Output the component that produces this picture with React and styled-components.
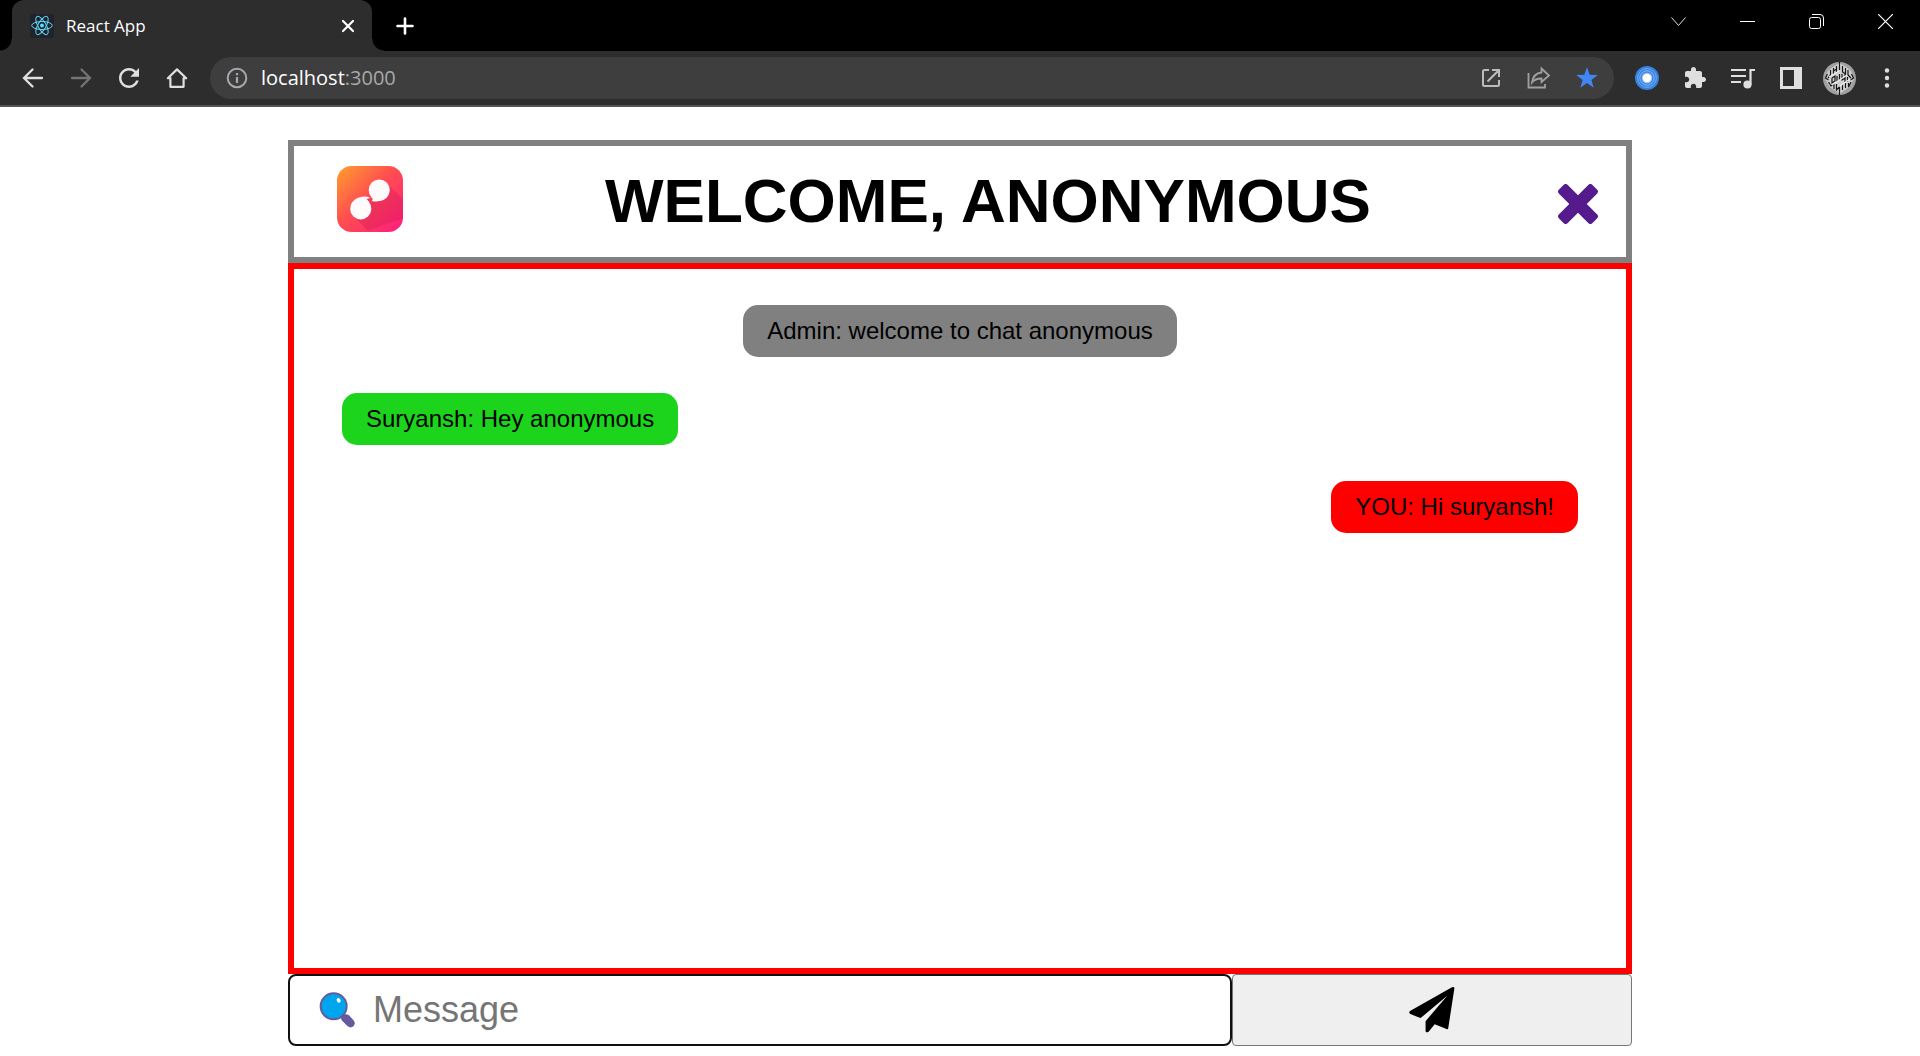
import React from "react";
import styled, { createGlobalStyle } from "styled-components";

const GlobalStyle = createGlobalStyle`
  * { box-sizing: border-box; }
  body { margin: 0; background: #ffffff; font-family: Arial, "Liberation Sans", sans-serif; }
  button, input { font: inherit; }
  h1 { margin: 0; }
`;

const Screen = styled.div`
  min-height: 100vh;
  display: flex;
  flex-direction: column;
`;

const BrowserFrame = styled.header`
  background: #2d2d2d;
  border-bottom: 2px solid #545454;
  font-family: "Segoe UI", "Open Sans", "Noto Sans", sans-serif;
`;

const TitleBar = styled.div`
  display: flex;
  height: 51px;
  padding-left: 12px;
  background: #000000;
`;

const Tab = styled.div`
  position: relative;
  display: flex;
  align-items: center;
  gap: 12px;
  width: 360px;
  padding: 0 12px 0 18px;
  border-radius: 12px 12px 0 0;
  background: #2d2d2d;
  color: #ffffff;
  font-size: 17px;

  &::before, &::after {
    content: "";
    position: absolute;
    bottom: 0;
    width: 12px;
    height: 12px;
  }
  &::before {
    right: 100%;
    background: radial-gradient(circle at 0 0, #000000 11px, #2d2d2d 12px);
  }
  &::after {
    left: 100%;
    background: radial-gradient(circle at 100% 0, #000000 11px, #2d2d2d 12px);
  }
`;

const TabTitle = styled.span`
  flex: 1;
`;

const IconButton = styled.button`
  display: flex;
  flex: none;
  align-items: center;
  justify-content: center;
  width: ${(p) => p.$width || 48}px;
  height: ${(p) => p.$height || 42}px;
  padding: 0;
  border: 0;
  background: transparent;
  color: ${(p) => p.$color || "#dfdfdf"};
`;

const NewTab = styled.div`
  display: flex;
  flex: 1;
  align-items: center;
  padding-left: 9px;
`;

const WindowControls = styled.div`
  display: flex;
  align-items: flex-start;
`;

const Toolbar = styled.div`
  display: flex;
  align-items: center;
  height: 54px;
  padding: 0 9px;
`;

const AddressBar = styled.div`
  display: flex;
  flex: 1;
  align-items: center;
  height: 42px;
  margin: 0 9px;
  padding: 0 3px;
  border-radius: 21px;
  background: #3e3e3e;
`;

const Address = styled.span`
  flex: 1;
  color: #ffffff;
  font-size: 20px;
  line-height: 42px;
`;

const Port = styled.span`
  color: #a8a8a8;
`;

const Page = styled.main`
  display: flex;
  flex: 1;
  flex-direction: column;
  align-items: center;
  padding: 33px 0 10px;
`;

const Chat = styled.section`
  display: flex;
  flex: 1;
  flex-direction: column;
  width: 70%;
`;

const ChatHeader = styled.div`
  display: flex;
  align-items: center;
  justify-content: space-between;
  padding: 19px 28px 20px;
  border: 6px solid #808080;
`;

const LogoBox = styled.div`
  display: flex;
  justify-content: center;
  width: 96px;
  padding-bottom: 5px;
`;

const Title = styled.h1`
  font-size: 62px;
  line-height: 72px;
`;

const CloseLink = styled.a`
  display: flex;
  padding-top: 6px;
  color: #551a8b;
`;

const Messages = styled.div`
  display: flex;
  flex: 1;
  flex-direction: column;
  gap: 36px;
  padding: 36px 48px;
  border: 6px solid #ff0000;
`;

const Bubble = styled.div`
  align-self: ${(p) => p.$side};
  padding: 12px 24px;
  border-radius: 15px;
  background: ${(p) => p.$color};
  color: #000000;
  font-size: 24px;
  line-height: 28px;
`;

const Composer = styled.form`
  display: flex;
  height: 72px;
`;

const MessageField = styled.label`
  display: flex;
  flex: 1;
  align-items: center;
  gap: 18px;
  padding: 0 29px;
  border: 2px solid #101010;
  border-radius: 8px;
  background: #ffffff;
`;

const MessageInput = styled.input`
  flex: 1;
  min-width: 0;
  padding: 0;
  border: 0;
  outline: 0;
  background: transparent;
  font-size: 36px;
  line-height: 42px;

  &::placeholder { color: #757575; opacity: 1; }
`;

const SendButton = styled.button`
  display: flex;
  align-items: center;
  justify-content: center;
  width: 400px;
  padding: 0;
  border: 1px solid #767676;
  border-radius: 4px;
  background: #efefef;
  color: #000000;
`;

const Line = ({ size = 24, width = 2, children, ...rest }) => (
  <svg width={size} height={size} viewBox={`0 0 ${size} ${size}`} fill="none" stroke="currentColor" strokeWidth={width} {...rest}>
    {children}
  </svg>
);

const ReactMark = () => (
  <svg width="24" height="24" viewBox="0 0 24 24" fill="none" stroke="#61dafb">
    <rect width="24" height="24" rx="2" fill="#20232a" stroke="none" />
    <circle cx="12" cy="11.5" r="2" fill="#61dafb" stroke="none" />
    <ellipse cx="12" cy="11.5" rx="10.3" ry="4" />
    <ellipse cx="12" cy="11.5" rx="10.3" ry="4" transform="rotate(60 12 11.5)" />
    <ellipse cx="12" cy="11.5" rx="10.3" ry="4" transform="rotate(120 12 11.5)" />
  </svg>
);

const ArrowIcon = ({ flip }) => (
  <Line width={2.3} strokeLinecap="round">
    <path d={flip ? "M3 12H20.5M12.5 3.5L21 12L12.5 20.5" : "M3.5 12H21M11.5 3.5L3 12L11.5 20.5"} />
  </Line>
);

const ReloadIcon = () => (
  <svg width="30" height="30" viewBox="0 0 24 24" fill="currentColor">
    <path d="M17.65 6.35C16.2 4.9 14.21 4 12 4c-4.42 0-7.99 3.58-7.99 8s3.57 8 7.99 8c3.73 0 6.84-2.55 7.73-6h-2.08c-.82 2.33-3.04 4-5.65 4-3.31 0-6-2.69-6-6s2.69-6 6-6c1.66 0 3.14.69 4.22 1.78L13 11h7V4l-2.35 2.35z" />
  </svg>
);

const HomeIcon = () => (
  <Line width={2.2} strokeLinejoin="round">
    <path d="M2.8 12.2L12 3.4L21.2 12.2H18.6V20.8H5.4V12.2Z" />
  </Line>
);

const InfoIcon = () => (
  <Line>
    <circle cx="12" cy="12" r="9.3" />
    <path d="M12 11V17M12 7V9.2" strokeWidth="2.2" />
  </Line>
);

const OpenIcon = () => (
  <Line>
    <path d="M10 4H5.5Q4 4 4 5.5V18.5Q4 20 5.5 20H18.5Q20 20 20 18.5V14M13 4H20V11M20 4L8.5 15.5" />
  </Line>
);

const ShareIcon = () => (
  <Line width={1.8}>
    <path d="M1.5 7V21.5H18V18" />
    <path d="M14.5 2.5L22 9.5L14.5 16V12.5Q8.5 12.3 5 16.5Q6.5 7.2 14.5 6.5Z" />
  </Line>
);

const StarIcon = () => (
  <svg width="24" height="24" viewBox="0 0 24 24" fill="#4285f4">
    <path d="M12 1L14.7 8.7L22.8 8.9L16.4 13.9L18.7 21.7L12 17.1L5.3 21.7L7.6 13.9L1.2 8.9L9.3 8.7Z" />
  </svg>
);

const TargetIcon = () => (
  <svg width="24" height="24" viewBox="0 0 24 24">
    <circle cx="12" cy="12" r="12" fill="#3480e0" />
    <circle cx="12" cy="12" r="9.4" fill="none" stroke="#7db0f0" strokeWidth="0.9" />
    <circle cx="12" cy="12" r="7.2" fill="#3f88e4" stroke="#8fbcf4" strokeWidth="0.9" />
    <circle cx="12" cy="12" r="5.2" fill="#a9cbf6" />
    <circle cx="12" cy="12" r="4" fill="#ffffff" />
  </svg>
);

const PuzzleIcon = () => (
  <svg width="24" height="24" viewBox="0 0 24 24" fill="currentColor">
    <path d="M20.5 11H19V7c0-1.1-.9-2-2-2h-4V3.5C13 2.12 11.88 1 10.5 1S8 2.12 8 3.5V5H4c-1.1 0-1.99.9-1.99 2v3.8H3.5c1.49 0 2.7 1.21 2.7 2.7s-1.21 2.7-2.7 2.7H2V20c0 1.1.9 2 2 2h3.8v-1.5c0-1.49 1.21-2.7 2.7-2.7 1.49 0 2.7 1.21 2.7 2.7V22H17c1.1 0 2-.9 2-2v-4h1.5c1.38 0 2.5-1.12 2.5-2.5S21.88 11 20.5 11z" />
  </svg>
);

const PlaylistIcon = () => (
  <Line width={2.2}>
    <path d="M0 4H15M0 10H15M0 16H10M24 4H19.5V18.5" />
    <circle cx="16.5" cy="18.5" r="3" fill="currentColor" />
  </Line>
);

const PanelIcon = () => (
  <svg width="22" height="22" viewBox="0 0 22 22" fill="currentColor">
    <path fillRule="evenodd" d="M0 0H22V22H0ZM3 3V19H14V3Z" />
  </svg>
);

const Avatar = () => (
  <svg width="33" height="33" viewBox="0 0 33 33" fill="none" stroke="#161616" strokeWidth="1.2">
    <circle cx="16.5" cy="16.5" r="16.5" fill="#a0a0a0" stroke="none" />
    <path d="M16.5 1L23 5L28 9L31 17L26 25L16.5 32L7 25L2 17L5 9L10 5Z" fill="#cfcfcf" stroke="none" />
    <path d="M16.5 0V8M16.5 25V33M13.5 4V11M10.5 6V12M13.5 7L10.5 9M19.5 4V10L22.5 12V6M25 8V13M7.5 8V13M4.500 12L2.500 16L5.500 18M7.500 13L5 16M28.500 12L30.500 16L27.500 18M25 13L28 16M9 16V21L12 19V14L9 16M14 14V20M16.500 12V18M19 12V18L22 16M22 12V20M24.500 15V20M5.500 20L8 24L11 22V27M13.500 22V28L16.500 25M19.500 22V28M22.500 21V26M25.500 21V25L28 20" />
    <path d="M6 15L16 9M9 23L24 13M17 24L27 17" stroke="#f2f2f2" />
  </svg>
);

const DotsIcon = () => (
  <svg width="24" height="24" viewBox="0 0 24 24" fill="currentColor">
    <circle cx="12" cy="4.5" r="2.2" />
    <circle cx="12" cy="12" r="2.2" />
    <circle cx="12" cy="19.5" r="2.2" />
  </svg>
);

const AppLogo = () => (
  <svg width="66" height="66" viewBox="0 0 200 200">
    <defs>
      <linearGradient id="logo-fill" x1="0" y1="0" x2="1" y2="1">
        <stop offset="0" stopColor="#ffa02c" />
        <stop offset="0.45" stopColor="#ff4f4f" />
        <stop offset="1" stopColor="#ff1a80" />
      </linearGradient>
      <clipPath id="logo-clip"><rect width="200" height="200" rx="44" /></clipPath>
    </defs>
    <g clipPath="url(#logo-clip)">
      <rect width="200" height="200" fill="url(#logo-fill)" />
      <path d="M150 52L200 100V160Q150 175 94 196L50 152L100 105Z" fill="#d81b55" opacity="0.4" />
    </g>
    <g fill="#fffafb">
      <circle cx="128" cy="73" r="32" />
      <circle cx="72" cy="130" r="32" />
      <path d="M97 80L107 98Q104 103 98 104Q108 110 128 106Q150 104 158 82Z" />
      <path d="M103 122L96 106L91 102L102 98Q94 90 76 93Q48 96 41 122Z" />
    </g>
    <path d="M90 100L98 98L110 99L105 104L111 108L102 107L96 106Z" fill="#f23a50" />
  </svg>
);

const CloseIcon = () => (
  <svg width="40" height="40" viewBox="0 0 120 120" fill="currentColor">
    <rect x="-11" y="41.5" width="142" height="37" rx="9" transform="rotate(45 60 60)" />
    <rect x="-11" y="41.5" width="142" height="37" rx="9" transform="rotate(-45 60 60)" />
  </svg>
);

const SearchIcon = () => (
  <svg width="36" height="36" viewBox="0 0 108 108">
    <path d="M66 76L76 67Q84 65 90 70L103 84Q111 94 104 102Q96 110 86 103L70 87Q65 81 66 76Z" fill="#655b9c" />
    <circle cx="44" cy="43" r="39" fill="#00a6ed" stroke="#655b9c" strokeWidth="6" />
    <ellipse cx="59" cy="25" rx="5.5" ry="7.5" transform="rotate(-28 59 25)" fill="#ffffff" />
  </svg>
);

const SendIcon = () => (
  <svg width="46" height="46" viewBox="0 0 136 136" fill="currentColor">
    <path d="M134 5L116 122Q115 126 111 124L76 110L58 132Q50 137 49 130V101L113 26L34 92L4 80Q-2 76 3 71L127 1Q135 -2 134 5Z" />
  </svg>
);

const messages = [
  { user: "Admin", text: "welcome to chat anonymous", side: "center", color: "#808080" },
  { user: "Suryansh", text: "Hey anonymous", side: "flex-start", color: "#1bd41b" },
  { user: "YOU", text: "Hi suryansh!", side: "flex-end", color: "#ff0000" },
];

export default function App() {
  return (
    <Screen>
      <GlobalStyle />
      <BrowserFrame>
        <TitleBar>
          <Tab>
            <ReactMark />
            <TabTitle>React App</TabTitle>
            <IconButton aria-label="Close tab" $width={24} $height={24} $color="#ffffff">
              <Line width={2.2} strokeLinecap="round"><path d="M7 7L17 17M17 7L7 17" /></Line>
            </IconButton>
          </Tab>
          <NewTab>
            <IconButton aria-label="New tab" $color="#ffffff">
              <Line width={2.6} strokeLinecap="round"><path d="M12 4.5V19.5M4.5 12H19.5" /></Line>
            </IconButton>
          </NewTab>
          <WindowControls>
            <IconButton aria-label="Search tabs" $width={69} $height={43}>
              <Line size={15} width={1}><path d="M0.5 3.5L7.5 11.5L14.5 3.5" /></Line>
            </IconButton>
            <IconButton aria-label="Minimize" $width={69} $height={43} $color="#ffffff">
              <Line size={15} width={1}><path d="M0 7.5H15" /></Line>
            </IconButton>
            <IconButton aria-label="Restore" $width={69} $height={43} $color="#ffffff">
              <Line size={15} width={1}>
                <rect x="0.5" y="3.5" width="11" height="11" rx="2" />
                <path d="M3 0.5H11Q14.5 0.5 14.5 4V12" />
              </Line>
            </IconButton>
            <IconButton aria-label="Close window" $width={69} $height={43} $color="#ffffff">
              <Line size={15} width={1.2}><path d="M0 0L15 15M15 0L0 15" /></Line>
            </IconButton>
          </WindowControls>
        </TitleBar>
        <Toolbar>
          <IconButton aria-label="Back"><ArrowIcon /></IconButton>
          <IconButton aria-label="Forward" $color="#747474"><ArrowIcon flip /></IconButton>
          <IconButton aria-label="Reload"><ReloadIcon /></IconButton>
          <IconButton aria-label="Home"><HomeIcon /></IconButton>
          <AddressBar>
            <IconButton aria-label="Site information" $color="#a5a8ac"><InfoIcon /></IconButton>
            <Address>localhost<Port>:3000</Port></Address>
            <IconButton aria-label="Open in app" $color="#bcbcbc"><OpenIcon /></IconButton>
            <IconButton aria-label="Share" $color="#a0a0a0"><ShareIcon /></IconButton>
            <IconButton aria-label="Bookmark"><StarIcon /></IconButton>
          </AddressBar>
          <IconButton aria-label="Recorder"><TargetIcon /></IconButton>
          <IconButton aria-label="Extensions"><PuzzleIcon /></IconButton>
          <IconButton aria-label="Media"><PlaylistIcon /></IconButton>
          <IconButton aria-label="Side panel"><PanelIcon /></IconButton>
          <IconButton aria-label="Profile"><Avatar /></IconButton>
          <IconButton aria-label="Menu"><DotsIcon /></IconButton>
        </Toolbar>
      </BrowserFrame>
      <Page>
        <Chat>
          <ChatHeader>
            <LogoBox><AppLogo /></LogoBox>
            <Title>WELCOME, ANONYMOUS</Title>
            <CloseLink href="#leave" aria-label="Leave chat"><CloseIcon /></CloseLink>
          </ChatHeader>
          <Messages>
            {messages.map((m) => (
              <Bubble key={m.user} $side={m.side} $color={m.color}>{m.user}: {m.text}</Bubble>
            ))}
          </Messages>
          <Composer onSubmit={(e) => e.preventDefault()}>
            <MessageField>
              <SearchIcon />
              <MessageInput type="text" placeholder="Message" aria-label="Message" />
            </MessageField>
            <SendButton type="submit" aria-label="Send"><SendIcon /></SendButton>
          </Composer>
        </Chat>
      </Page>
    </Screen>
  );
}
